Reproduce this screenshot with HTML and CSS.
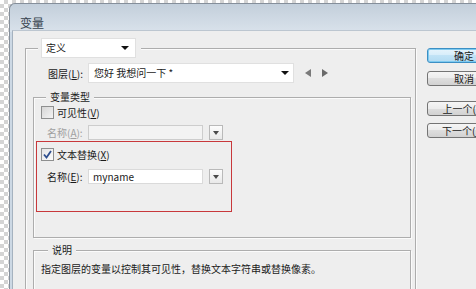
FILE: index.html
```html
<!DOCTYPE html>
<html lang="zh">
<head>
<meta charset="utf-8">
<title>变量</title>
<link rel="stylesheet" href="styles.css">
</head>
<body>
<div class="window">
  <div class="titlebar"><span class="title">变量</span></div>
  <div class="client">
    <fieldset class="group outer">
      <legend class="legend-select">
        <div class="select def"><span>定义</span><i class="caret"></i></div>
      </legend>
      <div class="layer-row">
        <span class="lbl">图层(<u>L</u>):</span>
        <div class="select layer"><span>您好 我想问一下 *</span><i class="caret"></i></div>
        <div class="nav"><i class="tri left"></i><i class="tri right"></i></div>
      </div>
      <fieldset class="group vars">
        <legend>变量类型</legend>
        <label class="check"><span class="box"></span><span>可见性(<u>V</u>)</span></label>
        <div class="field disabled">
          <span class="lbl">名称(<u>A</u>):</span>
          <div class="input"></div>
          <div class="dd"><i class="caret small"></i></div>
        </div>
        <div class="highlight">
          <label class="check"><span class="box checked"><svg width="11" height="11" viewBox="0 0 11 11"><polyline points="2,5.5 4.5,8.5 9,2" fill="none" stroke="#2f4f8f" stroke-width="1.8"/></svg></span><span>文本替换(<u>X</u>)</span></label>
          <div class="field">
            <span class="lbl">名称(<u>E</u>):</span>
            <div class="input">myname</div>
            <div class="dd"><i class="caret small"></i></div>
          </div>
        </div>
      </fieldset>
      <fieldset class="group desc">
        <legend>说明</legend>
        <p>指定图层的变量以控制其可见性，替换文本字符串或替换像素。</p>
      </fieldset>
    </fieldset>
    <div class="buttons">
      <div class="btn default">确定</div>
      <div class="btn gap8">取消</div>
      <div class="btn gap15">上一个(<u>P</u>)</div>
      <div class="btn gap7">下一个(<u>N</u>)</div>
    </div>
  </div>
</div>
</body>
</html>
```
FILE: styles.css
```css
* { box-sizing: border-box; }
html, body { margin: 0; height: 100%; overflow: hidden; }
body {
  background: repeating-conic-gradient(#d4d4d4 0 25%, #ffffff 0 50%) 0 0 / 8px 8px;
  font-family: "Noto Sans CJK SC", "Noto Sans", sans-serif;
  font-size: 10px;
  color: #1a1a1a;
}
u { text-decoration: underline; text-underline-offset: 1px; }

.window {
  margin: 3px 0 0 9px;
  width: 560px;
  height: 320px;
  border-left: 1px solid #858f9b;
  border-top: 1px solid #858f9b;
  border-top-left-radius: 6px;
  background: linear-gradient(#c3cfdb 0, #d9e2eb 28px, #ccd8e4 28px);
  padding-left: 2px;
  display: flex;
  flex-direction: column;
}
.titlebar {
  height: 28px;
  padding: 12px 0 0 8px;
  font-size: 12px;
  line-height: 14px;
  color: #35414d;
}
.client {
  flex: 1;
  background: #eeeeee;
  border-left: 1px solid #a5b2bf;
  border-top: 1px solid #bcc6d0;
  display: flex;
  align-items: flex-start;
}

.group {
  margin: 0;
  border: 1px solid #adadad;
  box-shadow: inset 1px 1px 0 #fbfbfb, 1px 1px 0 #fbfbfb;
  min-inline-size: 0;
}
.group > legend {
  padding: 0 4px;
  line-height: 12px;
  background: #eeeeee;
}
.outer {
  flex: none;
  margin: 7px 0 0 12px;
  width: 391px;
  height: 290px;
  padding: 5px 4px 0 7px;
}
.outer > legend.legend-select {
  margin-left: 5px;
  padding: 0 5px 0 3px;
  line-height: normal;
}

.select {
  background: #ffffff;
  border: 1px solid #e0e0e0;
  height: 20px;
  display: flex;
  align-items: center;
  justify-content: space-between;
  line-height: 12px;
}
.select.def { width: 95px; padding: 0 6px 0 4px; }
.select.layer { width: 206px; padding: 0 4px 0 5px; }
.caret {
  width: 0; height: 0;
  border-left: 4px solid transparent;
  border-right: 4px solid transparent;
  border-top: 4px solid #111;
}
.caret.small {
  border-left-width: 3.5px;
  border-right-width: 3.5px;
  border-top: 4px solid #4a4a4a;
}

.layer-row {
  display: flex;
  align-items: center;
  height: 20px;
  padding-left: 15px;
}
.layer-row .lbl { width: 40px; }
.nav { margin-left: 11px; display: flex; gap: 11px; }
.tri { width: 0; height: 0; border-top: 4.5px solid transparent; border-bottom: 4.5px solid transparent; }
.tri.left { border-right: 6px solid #7a7a7a; }
.tri.right { border-left: 6px solid #6a6a6a; }

.vars {
  margin-top: 8px;
  padding: 2px 0 25px 2px;
  width: 378px;
}
.vars > legend { margin-left: 10px; }

.check {
  display: flex;
  align-items: center;
  gap: 3px;
  height: 15px;
  margin-left: 5px;
  line-height: 12px;
}
.box {
  width: 13px; height: 13px;
  border: 1px solid #8e8f8f;
  background: linear-gradient(135deg, #d6d6d6, #f4f4f4);
  display: flex;
  align-items: center;
  justify-content: center;
}
.box.checked { background: linear-gradient(135deg, #e6e6e6, #fbfbfb); }

.field {
  display: flex;
  align-items: center;
  height: 15px;
  margin-top: 5px;
  padding-left: 11px;
  line-height: 12px;
}
.field .lbl { width: 41px; }
.input {
  width: 115px;
  height: 15px;
  background: #ffffff;
  border: 1px solid #dadada;
  padding-left: 4px;
  line-height: 13px;
}
.dd {
  width: 14px;
  height: 15px;
  margin-left: 6px;
  border: 1px solid #b9b9b9;
  background: linear-gradient(#fcfcfc, #e9e9e9);
  display: flex;
  align-items: center;
  justify-content: center;
}
.disabled .lbl { color: #a0a0a0; }
.disabled .input { background: #f3f3f3; border-color: #cdcdcd; }

.highlight {
  width: 196px;
  margin-top: 1px;
  border: 1px solid #c8383b;
  padding: 5px 0 27px 4px;
}
.highlight .check { margin-left: 0; }
.highlight .field { margin-top: 7px; padding-left: 6px; }

.desc {
  margin-top: 6px;
  width: 378px;
  height: 70px;
  padding: 7px 4px 0 7px;
}
.desc > legend { margin-left: 7px; }
.desc p { margin: 0; line-height: 12px; }

.buttons {
  flex: none;
  margin: 17px 0 0 11px;
  display: flex;
  flex-direction: column;
}
.btn {
  width: 74px;
  height: 15px;
  border: 1px solid #747474;
  border-radius: 3px;
  background: linear-gradient(#f5f5f5, #ececec 50%, #dedede 50%, #d2d2d2);
  line-height: 13px;
  text-align: center;
  flex: none;
}
.btn.default {
  border-color: #3c8fc4;
  background: linear-gradient(#e6f4fc, #d6edfa 50%, #c1e3f6 50%, #b2dbf2);
  box-shadow: inset 0 0 0 1px #7ecaf0;
}
.gap8 { margin-top: 8px; }
.gap15 { margin-top: 15px; }
.gap7 { margin-top: 7px; }
```
